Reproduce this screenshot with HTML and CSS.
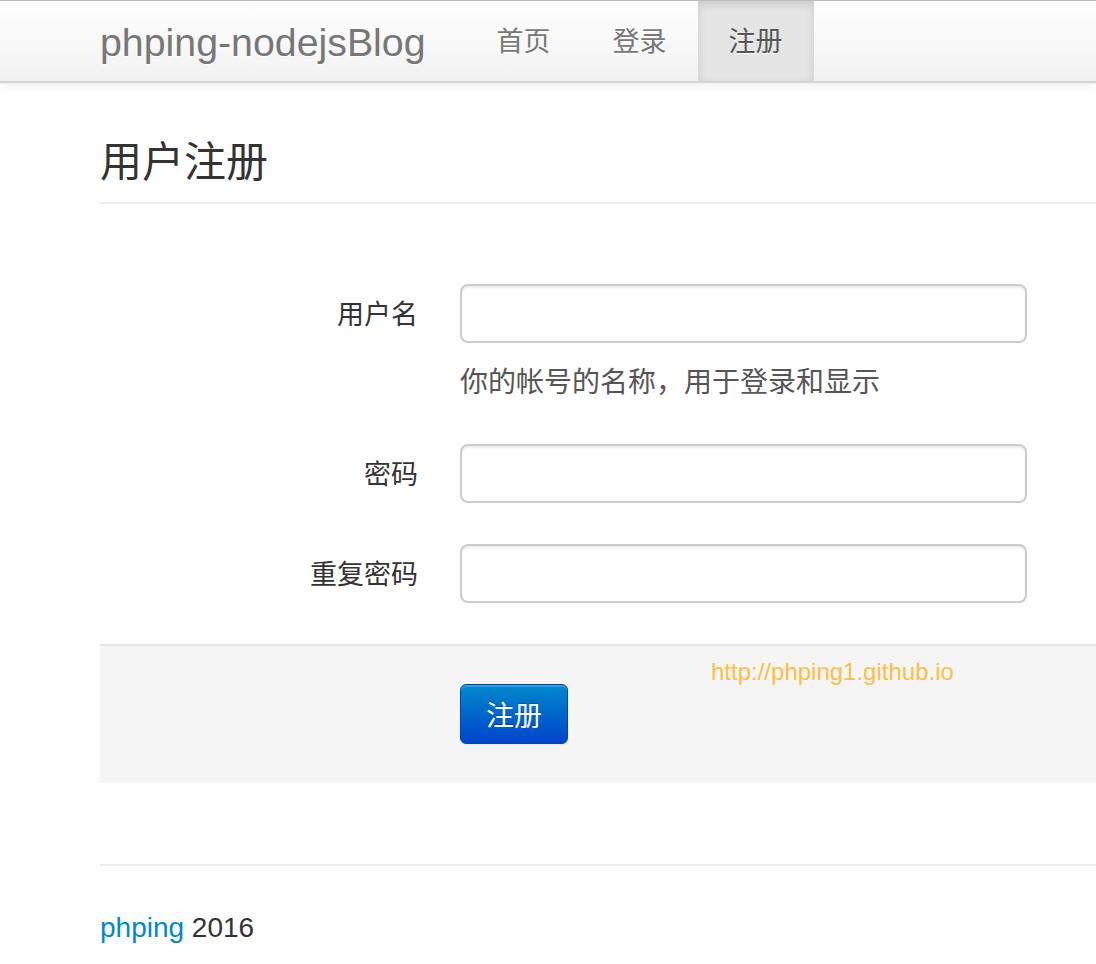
FILE: index.html
```html
<!DOCTYPE html>
<html lang="zh-CN">
<head>
<meta charset="utf-8">
<title>phping-nodejsBlog</title>
<link rel="stylesheet" href="styles.css">
</head>
<body>
<div class="navbar">
  <div class="navbar-inner">
    <a class="brand" href="#">phping-nodejsBlog</a>
    <ul class="nav">
      <li><a href="#">首页</a></li>
      <li><a href="#">登录</a></li>
      <li class="active"><a href="#">注册</a></li>
    </ul>
  </div>
</div>
<div class="container">
  <div class="page-header">
    <h1>用户注册</h1>
  </div>
  <form class="form-horizontal">
    <div class="control-group">
      <label class="control-label">用户名</label>
      <div class="controls">
        <input class="input" type="text">
        <p class="help-block">你的帐号的名称，用于登录和显示</p>
      </div>
    </div>
    <div class="control-group">
      <label class="control-label">密码</label>
      <div class="controls">
        <input class="input" type="password">
      </div>
    </div>
    <div class="control-group last">
      <label class="control-label">重复密码</label>
      <div class="controls">
        <input class="input" type="password">
      </div>
    </div>
    <div class="form-actions">
      <button type="button" class="btn-primary">注册</button>
      <span class="watermark">http://phping1.github.io</span>
    </div>
  </form>
  <hr class="footer-rule">
  <footer class="footer"><a href="#">phping</a> 2016</footer>
</div>
</body>
</html>
```
FILE: styles.css
```css
* { box-sizing: border-box; }
html, body { margin: 0; padding: 0; }
body {
  font-family: "Liberation Sans", "Noto Sans CJK SC", sans-serif;
  font-size: 28px;
  color: #333;
  background: #fff;
  overflow: hidden;
}
a { text-decoration: none; }

.navbar {
  border-top: 1px solid #bdbdbd;
  border-bottom: 2px solid #d4d4d4;
  background: linear-gradient(#ffffff, #f2f2f2);
  box-shadow: 0 2px 10px rgba(0,0,0,0.08);
  height: 83px;
}
.navbar-inner {
  display: flex;
  align-items: stretch;
  height: 80px;
  padding-left: 100px;
}
.brand {
  font-size: 39.3px;
  color: #777;
  line-height: 82px;
  margin-right: 40px;
  text-shadow: 0 1px 0 #fff;
}
.nav {
  display: flex;
  list-style: none;
  margin: 0;
  padding: 0;
}
.nav li a {
  display: block;
  height: 80px;
  line-height: 82px;
  padding: 0 31px 0 31px;
  font-size: 27px;
  color: #777;
  text-shadow: 0 1px 0 #fff;
}
.nav li.active a {
  background: #e5e5e5;
  color: #555;
  box-shadow: inset 0 3px 8px rgba(0,0,0,0.125);
}

.container {
  margin-left: 100px;
}
.page-header {
  margin-top: 55px;
  padding-bottom: 14px;
  border-bottom: 2px solid #eee;
}
.page-header h1 {
  margin: 0;
  font-size: 42px;
  font-weight: normal;
  line-height: 50px;
  color: #333;
}

.form-horizontal {
  margin-top: 80px;
}
.control-group {
  display: flex;
  align-items: flex-start;
  margin-bottom: 41px;
}
.control-label {
  width: 318px;
  text-align: right;
  line-height: 55px;
  padding-top: 4px;
  font-size: 27px;
  color: #333;
}
.controls {
  margin-left: 42px;
}
.input {
  display: block;
  width: 567px;
  height: 59px;
  border: 2px solid #ccc;
  border-radius: 8px;
  box-shadow: inset 0 2px 2px rgba(0,0,0,0.075);
  background: #fff;
  font-size: 28px;
  padding: 8px 12px;
  margin: 0;
}
.help-block {
  margin: 20px 0 0;
  line-height: 40px;
  font-size: 28px;
  color: #555;
}

.form-actions {
  position: relative;
  border-top: 2px solid #e5e5e5;
  background: #f5f5f5;
  padding: 38px 0 39px 360px;
}
.btn-primary {
  display: block;
  width: 108px;
  height: 60px;
  border: 1px solid #0044b3;
  border-radius: 6px;
  background: linear-gradient(#0088cc, #0044cc);
  box-shadow: inset 0 2px 0 rgba(255,255,255,0.2), 0 1px 2px rgba(0,0,0,0.05);
  color: #fff;
  font-family: "Liberation Sans", "Noto Sans CJK SC", sans-serif;
  font-size: 28px;
  text-shadow: 0 -1px 0 rgba(0,0,0,0.25);
  padding: 0;
  cursor: pointer;
}
.watermark {
  position: absolute;
  left: 611px;
  top: 12px;
  font-size: 24px;
  color: #fbbf45;
}

.footer-rule {
  margin: 81px 0 0;
  border: 0;
  border-top: 2px solid #eee;
  height: 0;
}
.footer {
  margin-top: 42px;
  line-height: 40px;
  font-size: 28px;
  color: #333;
}
.footer a { color: #0088cc; }
```
